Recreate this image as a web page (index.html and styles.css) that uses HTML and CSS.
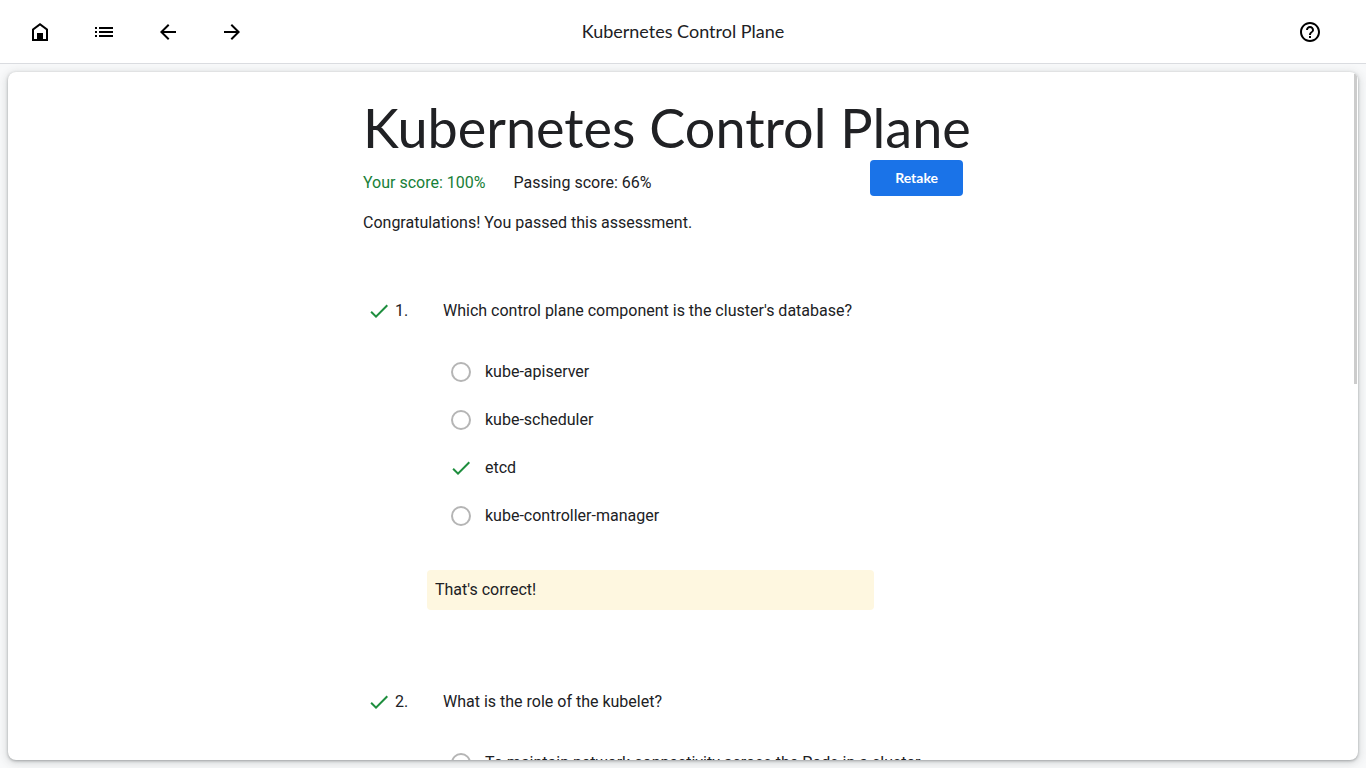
FILE: index.html
```html
<!DOCTYPE html>
<html lang="en">
<head>
<meta charset="utf-8">
<meta name="viewport" content="width=device-width, initial-scale=1">
<title>Kubernetes Control Plane</title>
<link rel="stylesheet" href="styles.css">
</head>
<body>
<svg class="sprite" aria-hidden="true">
  <symbol id="check" viewBox="0 0 24 24"><path d="M9 16.17 4.83 12l-1.42 1.41L9 19 21 7l-1.41-1.41z"/></symbol>
</svg>
<header class="topbar">
  <nav class="tools" aria-label="Course">
    <button class="icon-button" type="button" aria-label="Home"><svg class="icon" viewBox="0 0 24 24"><path fill-rule="evenodd" d="M4 21V9l8-6 8 6v12zM6 19h3v-6h6v6h3v-9l-6-4.500-6 4.500z"/><path d="M9 13h6v7H9z"/></svg></button>
    <button class="icon-button" type="button" aria-label="Contents"><svg class="icon" viewBox="0 0 24 24"><path d="M3 7h2v2H3zm0 4h2v2H3zm0 4h2v2H3zM7 7h14v2H7zm0 4h14v2H7zm0 4h14v2H7z"/></svg></button>
    <button class="icon-button" type="button" aria-label="Previous"><svg class="icon" viewBox="0 0 24 24"><path d="M20 11H7.830l5.590-5.590L12 4l-8 8 8 8 1.410-1.410L7.830 13H20z"/></svg></button>
    <button class="icon-button" type="button" aria-label="Next"><svg class="icon" viewBox="0 0 24 24"><path d="M12 4l-1.410 1.410L16.170 11H4v2h12.170l-5.580 5.590L12 20l8-8z"/></svg></button>
  </nav>
  <div class="topbar-title">Kubernetes Control Plane</div>
  <div class="help">
    <button class="icon-button" type="button" aria-label="Help"><svg class="icon" viewBox="0 0 24 24"><path d="M11 18h2v-2h-2zm1-16C6.480 2 2 6.480 2 12s4.480 10 10 10 10-4.480 10-10S17.520 2 12 2zm0 18c-4.410 0-8-3.590-8-8s3.590-8 8-8 8 3.590 8 8-3.590 8-8 8zm0-14c-2.210 0-4 1.790-4 4h2c0-1.100.9-2 2-2s2 .9 2 2c0 2-3 1.750-3 5h2c0-2.250 3-2.500 3-5 0-2.210-1.790-4-4-4z"/></svg></button>
  </div>
</header>
<main class="stage">
  <div class="card">
    <div class="content">
      <h1 class="title">Kubernetes Control Plane</h1>
      <div class="summary">
        <span class="score">Your score: 100%</span>
        <span>Passing score: 66%</span>
        <button class="retake" type="button">Retake</button>
      </div>
      <p class="result">Congratulations! You passed this assessment.</p>

      <section class="question">
        <div class="prompt">
          <svg class="check" role="img" aria-label="Correct"><use href="#check"/></svg>
          <span class="number">1.</span>
          <span id="q1">Which control plane component is the cluster's database?</span>
        </div>
        <div class="options" role="radiogroup" aria-labelledby="q1">
          <label class="option"><input class="radio" type="radio" name="q1"><span>kube-apiserver</span></label>
          <label class="option"><input class="radio" type="radio" name="q1"><span>kube-scheduler</span></label>
          <div class="option"><svg class="check" role="img" aria-label="Correct answer"><use href="#check"/></svg><span>etcd</span></div>
          <label class="option"><input class="radio" type="radio" name="q1"><span>kube-controller-manager</span></label>
        </div>
        <p class="feedback">That's correct!</p>
      </section>

      <section class="question">
        <div class="prompt">
          <svg class="check" role="img" aria-label="Correct"><use href="#check"/></svg>
          <span class="number">2.</span>
          <span id="q2">What is the role of the kubelet?</span>
        </div>
        <div class="options" role="radiogroup" aria-labelledby="q2">
          <label class="option"><input class="radio" type="radio" name="q2"><span>To maintain network connectivity across the Pods in a cluster</span></label>
        </div>
      </section>
    </div>
    <div class="scroll-thumb"></div>
  </div>
</main>
</body>
</html>
```
FILE: styles.css
```css
* { box-sizing: border-box; }

body {
  margin: 0;
  height: 100vh;
  display: flex;
  flex-direction: column;
  overflow: hidden;
  background: #f8f9fa;
  color: #202124;
  font: 16px/24px Roboto, sans-serif;
}

.sprite { display: none; }

.topbar {
  display: grid;
  grid-template-columns: 1fr auto 1fr;
  align-items: center;
  height: 64px;
  flex: none;
  padding: 0 32px 0 16px;
  background: #fff;
  border-bottom: 1px solid #dadce0;
}

.tools { display: flex; gap: 16px; }
.help { display: flex; justify-content: flex-end; }

.icon-button {
  width: 48px;
  height: 48px;
  padding: 12px;
  border: 0;
  background: none;
  cursor: pointer;
}

.icon { display: block; width: 24px; height: 24px; fill: #000; }

.topbar-title {
  padding: 0 0 2px 16px;
  font: 18px/24px "Google Sans", Lato, sans-serif;
}

.stage { flex: 1; min-height: 0; padding: 8px; }

.card {
  position: relative;
  height: 100%;
  overflow: hidden;
  background: #fff;
  border-radius: 8px;
  box-shadow: 0 1px 3px rgba(60, 64, 67, .4), 0 2px 8px 2px rgba(60, 64, 67, .15);
}

.scroll-thumb {
  position: absolute;
  top: 2px;
  right: 1px;
  width: 3px;
  height: 45%;
  background: #ccc;
}

.content {
  max-width: 640px;
  margin: 0 auto;
  padding-top: 24px;
}

.title {
  margin: 0;
  font: 400 54px/64px "Google Sans", Lato, sans-serif;
  white-space: nowrap;
}

.summary {
  display: flex;
  align-items: center;
  gap: 28px;
  height: 36px;
  padding-right: 40px;
}

.summary span { padding-top: 10px; }
.score { color: #188038; }

.retake {
  margin-left: auto;
  height: 36px;
  padding: 0 25px;
  border: 0;
  border-radius: 4px;
  background: #1a73e8;
  color: #fff;
  font: 700 14px/20px "Google Sans", Lato, sans-serif;
  cursor: pointer;
}

.result { margin: 15px 0 64px; }

.prompt { display: flex; align-items: center; }
.check { width: 24px; height: 24px; flex: none; fill: #1e8e3e; }
.prompt .check { margin: 0 4px; }
.number { width: 48px; }

.options { padding: 25px 0 30px 86px; }
.option { display: flex; align-items: center; gap: 12px; height: 48px; }

.radio {
  appearance: none;
  width: 20px;
  height: 20px;
  margin: 0 2px;
  flex: none;
  border: 2px solid #b5b5b5;
  border-radius: 50%;
}

.feedback {
  width: 447px;
  max-width: 100%;
  margin: 0 0 80px 64px;
  padding: 8px;
  border-radius: 4px;
  background: #fef7e0;
}
```
